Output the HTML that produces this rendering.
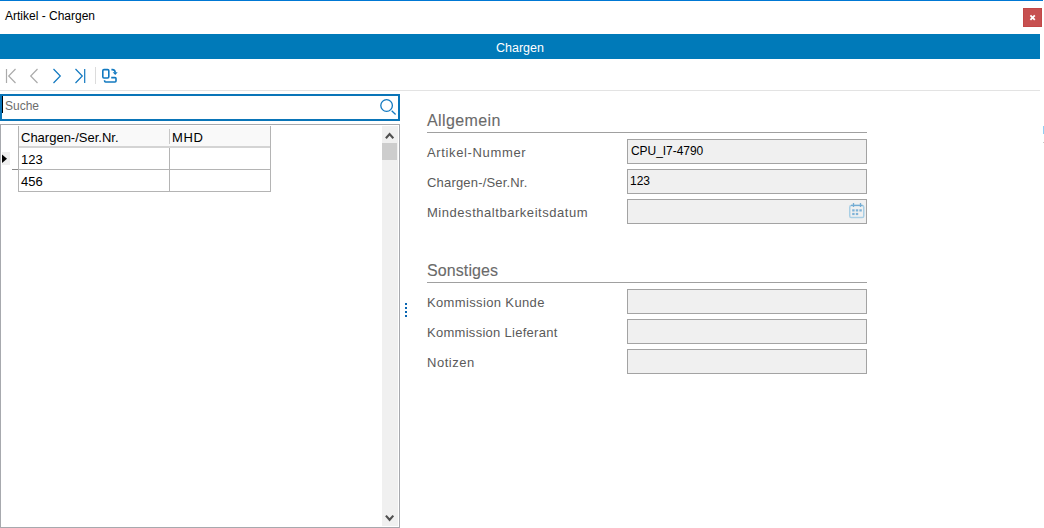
<!DOCTYPE html>
<html><head><meta charset="utf-8">
<style>
*{margin:0;padding:0;box-sizing:border-box}
html,body{width:1044px;height:528px;overflow:hidden;background:#fff;font-family:"Liberation Sans",sans-serif;position:relative}
.a{position:absolute}
.t{position:absolute;white-space:nowrap;line-height:1}
</style></head><body>
<!-- top line -->
<div class="a" style="left:0;top:0;width:1043px;height:1px;background:#0078d4"></div>
<div class="t" style="left:5px;top:10px;font-size:12px;color:#000">Artikel - Chargen</div>
<div class="a" style="left:1023px;top:8px;width:19px;height:19px;background:#c75050;border:1px solid #c24747"></div>
<svg class="a" style="left:1023px;top:8px" width="19" height="19"><path d="M7.4 7.4L11.8 11.8M11.8 7.4L7.4 11.8" stroke="#fff" stroke-width="1.8"/></svg>
<!-- blue bar -->
<div class="a" style="left:0;top:34px;width:1040px;height:25px;background:#007ab9"></div>
<div class="t" style="left:0;width:1040px;text-align:center;top:42px;font-size:12.5px;color:#fff">Chargen</div>
<!-- toolbar -->
<svg class="a" style="left:0;top:60px" width="130" height="30">
 <g fill="none" stroke-width="1.2">
  <path d="M6.5 9V23 M15.5 9L8.7 16L15.5 23" stroke="#ababab"/>
  <path d="M37.5 9L30.7 16L37.5 23" stroke="#ababab"/>
  <path d="M53.5 9L60.3 16L53.5 23" stroke="#1279c0"/>
  <path d="M75.5 9L82.3 16L75.5 23 M84.7 9V23" stroke="#1279c0"/>
 </g>
 <path d="M95.5 7V24" stroke="#dcdcdc" stroke-width="1"/>
 <g fill="none" stroke="#1279c0" stroke-width="1.6">
  <rect x="102.8" y="9.6" width="6" height="8.4" rx="1.2"/>
  <path d="M104.6 20.2V21Q104.6 22 105.6 22H115Q116 22 116 21V18.6Q116 17.6 115 17.6H111.2"/>
  <path d="M111.4 9.6H112.4Q115.2 9.6 115.2 12.6"/>
 </g>
 <path d="M112.7 12.2H117.7L115.2 15Z" fill="#1279c0"/>
</svg>
<div class="a" style="left:0;top:90px;width:1040px;height:1px;background:#e3e3e3"></div>
<!-- search -->
<div class="a" style="left:0;top:94px;width:400px;height:27px;border:2px solid #0a75b8"></div>
<div class="a" style="left:2px;top:96px;width:1px;height:17px;background:#000"></div>
<div class="t" style="left:5px;top:100px;font-size:12px;color:#6d6d6d">Suche</div>
<svg class="a" style="left:376px;top:96px" width="22" height="22">
 <circle cx="10.6" cy="9.5" r="5.8" fill="none" stroke="#1279c0" stroke-width="1.3"/>
 <path d="M15.7 14.8L19.6 18.5" stroke="#1279c0" stroke-width="1.3"/>
</svg>
<!-- grid -->
<div class="a" style="left:0;top:124px;width:400px;height:404px;border:1px solid #a7a9ae"></div>
<div class="a" style="left:18px;top:126px;width:253px;height:22px;background:#f9f9f9;border-bottom:2px solid #d4d4d4"></div>
<div class="a" style="left:18px;top:126px;width:1px;height:66px;background:#b4b4b4"></div>
<div class="a" style="left:270px;top:126px;width:1px;height:66px;background:#b4b4b4"></div>
<div class="a" style="left:169px;top:129px;width:1px;height:15px;background:#c8c8c8"></div>
<div class="a" style="left:169px;top:148px;width:1px;height:44px;background:#b4b4b4"></div>
<div class="a" style="left:18px;top:169px;width:253px;height:1px;background:#b4b4b4"></div>
<div class="a" style="left:18px;top:191px;width:253px;height:1px;background:#b4b4b4"></div>
<div class="a" style="left:12px;top:169px;width:6px;height:1px;background:#8a8a8a"></div>
<div class="t" style="left:21px;top:131px;font-size:13px;color:#000">Chargen-/Ser.Nr.</div>
<div class="t" style="left:172px;top:131px;font-size:13px;color:#000;letter-spacing:0.6px">MHD</div>
<div class="t" style="left:21px;top:153px;font-size:13px;color:#000">123</div>
<div class="t" style="left:21px;top:175px;font-size:13px;color:#000">456</div>
<div class="a" style="left:2px;top:152px;width:8px;height:13px;background:#efefef"></div>
<svg class="a" style="left:2px;top:154px" width="6" height="10"><path d="M0 0.5L5 4.8L0 9Z" fill="#000"/></svg>
<!-- scrollbar -->
<div class="a" style="left:382px;top:126px;width:16px;height:400px;background:#f0f0f0"></div>
<div class="a" style="left:382px;top:143px;width:15px;height:17px;background:#cdcdcd"></div>
<svg class="a" style="left:382px;top:126px" width="16" height="18"><path d="M3.9 12.3L7.6 8.1L11.3 12.3" fill="none" stroke="#505050" stroke-width="2.1"/></svg>
<svg class="a" style="left:382px;top:508px" width="16" height="18"><path d="M3.9 7.6L7.6 11.8L11.3 7.6" fill="none" stroke="#505050" stroke-width="2.1"/></svg>
<!-- splitter dots -->
<svg class="a" style="left:403px;top:300px" width="6" height="20" fill="#0a66b2">
 <rect x="2" y="3" width="2" height="2"/><rect x="2" y="7" width="2" height="2"/><rect x="2" y="11" width="2" height="2"/><rect x="2" y="15" width="2" height="2"/>
</svg>
<!-- right panel -->
<div class="t" style="left:427px;top:113px;font-size:16px;color:#6a6a6a;-webkit-text-stroke:0.1px #6a6a6a;letter-spacing:0.4px">Allgemein</div>
<div class="a" style="left:427px;top:132px;width:440px;height:1px;background:#a0a0a0"></div>
<div class="t" style="left:427px;top:146px;font-size:13px;color:#5a5a5a;letter-spacing:0.64px">Artikel-Nummer</div>
<div class="t" style="left:427px;top:176px;font-size:13px;color:#5a5a5a;letter-spacing:0.18px">Chargen-/Ser.Nr.</div>
<div class="t" style="left:427px;top:206px;font-size:13px;color:#5a5a5a;letter-spacing:0.54px">Mindesthaltbarkeitsdatum</div>
<div class="a" style="left:627px;top:139px;width:240px;height:25px;background:#f0f0f0;border:1px solid #a3a3a3"></div>
<div class="a" style="left:627px;top:169px;width:240px;height:25px;background:#f0f0f0;border:1px solid #a3a3a3"></div>
<div class="a" style="left:627px;top:199px;width:240px;height:25px;background:#f0f0f0;border:1px solid #a3a3a3"></div>
<div class="t" style="left:631px;top:145px;font-size:12px;color:#000;letter-spacing:-0.05px">CPU_I7-4790</div>
<div class="t" style="left:630px;top:175px;font-size:12px;color:#000">123</div>
<svg class="a" style="left:848px;top:202px" width="18" height="17">
 <rect x="1.75" y="3.6" width="14" height="12" rx="1.6" fill="none" stroke="#a9cfe5" stroke-width="1.5"/>
 <path d="M3 3.4H14.5 M5.5 1V5 M12.5 1V5" fill="none" stroke="#74acd3" stroke-width="1.3"/>
 <g fill="#7fb3d8"><rect x="4.2" y="7.3" width="2.4" height="2.2"/><rect x="7.8" y="7.3" width="2.4" height="2.2"/><rect x="11.4" y="7.3" width="2.4" height="2.2"/><rect x="4.2" y="10.9" width="2.4" height="2.2"/><rect x="7.8" y="10.9" width="2.4" height="2.2"/></g>
</svg>
<div class="t" style="left:427px;top:263px;font-size:16px;color:#6a6a6a;-webkit-text-stroke:0.1px #6a6a6a;letter-spacing:0.1px">Sonstiges</div>
<div class="a" style="left:427px;top:282px;width:440px;height:1px;background:#a0a0a0"></div>
<div class="t" style="left:427px;top:296px;font-size:13px;color:#5a5a5a;letter-spacing:0.36px">Kommission Kunde</div>
<div class="t" style="left:427px;top:326px;font-size:13px;color:#5a5a5a;letter-spacing:0.28px">Kommission Lieferant</div>
<div class="t" style="left:427px;top:356px;font-size:13px;color:#5a5a5a;letter-spacing:0.53px">Notizen</div>
<div class="a" style="left:627px;top:289px;width:240px;height:25px;background:#f0f0f0;border:1px solid #a3a3a3"></div>
<div class="a" style="left:627px;top:319px;width:240px;height:25px;background:#f0f0f0;border:1px solid #a3a3a3"></div>
<div class="a" style="left:627px;top:349px;width:240px;height:25px;background:#f0f0f0;border:1px solid #a3a3a3"></div>
<!-- right edge marks -->
<div class="a" style="left:1043px;top:126px;width:1px;height:8px;background:#8fd0f5"></div>
<div class="a" style="left:1043px;top:142px;width:1px;height:1px;background:#c8c8c8"></div>
</body></html>
